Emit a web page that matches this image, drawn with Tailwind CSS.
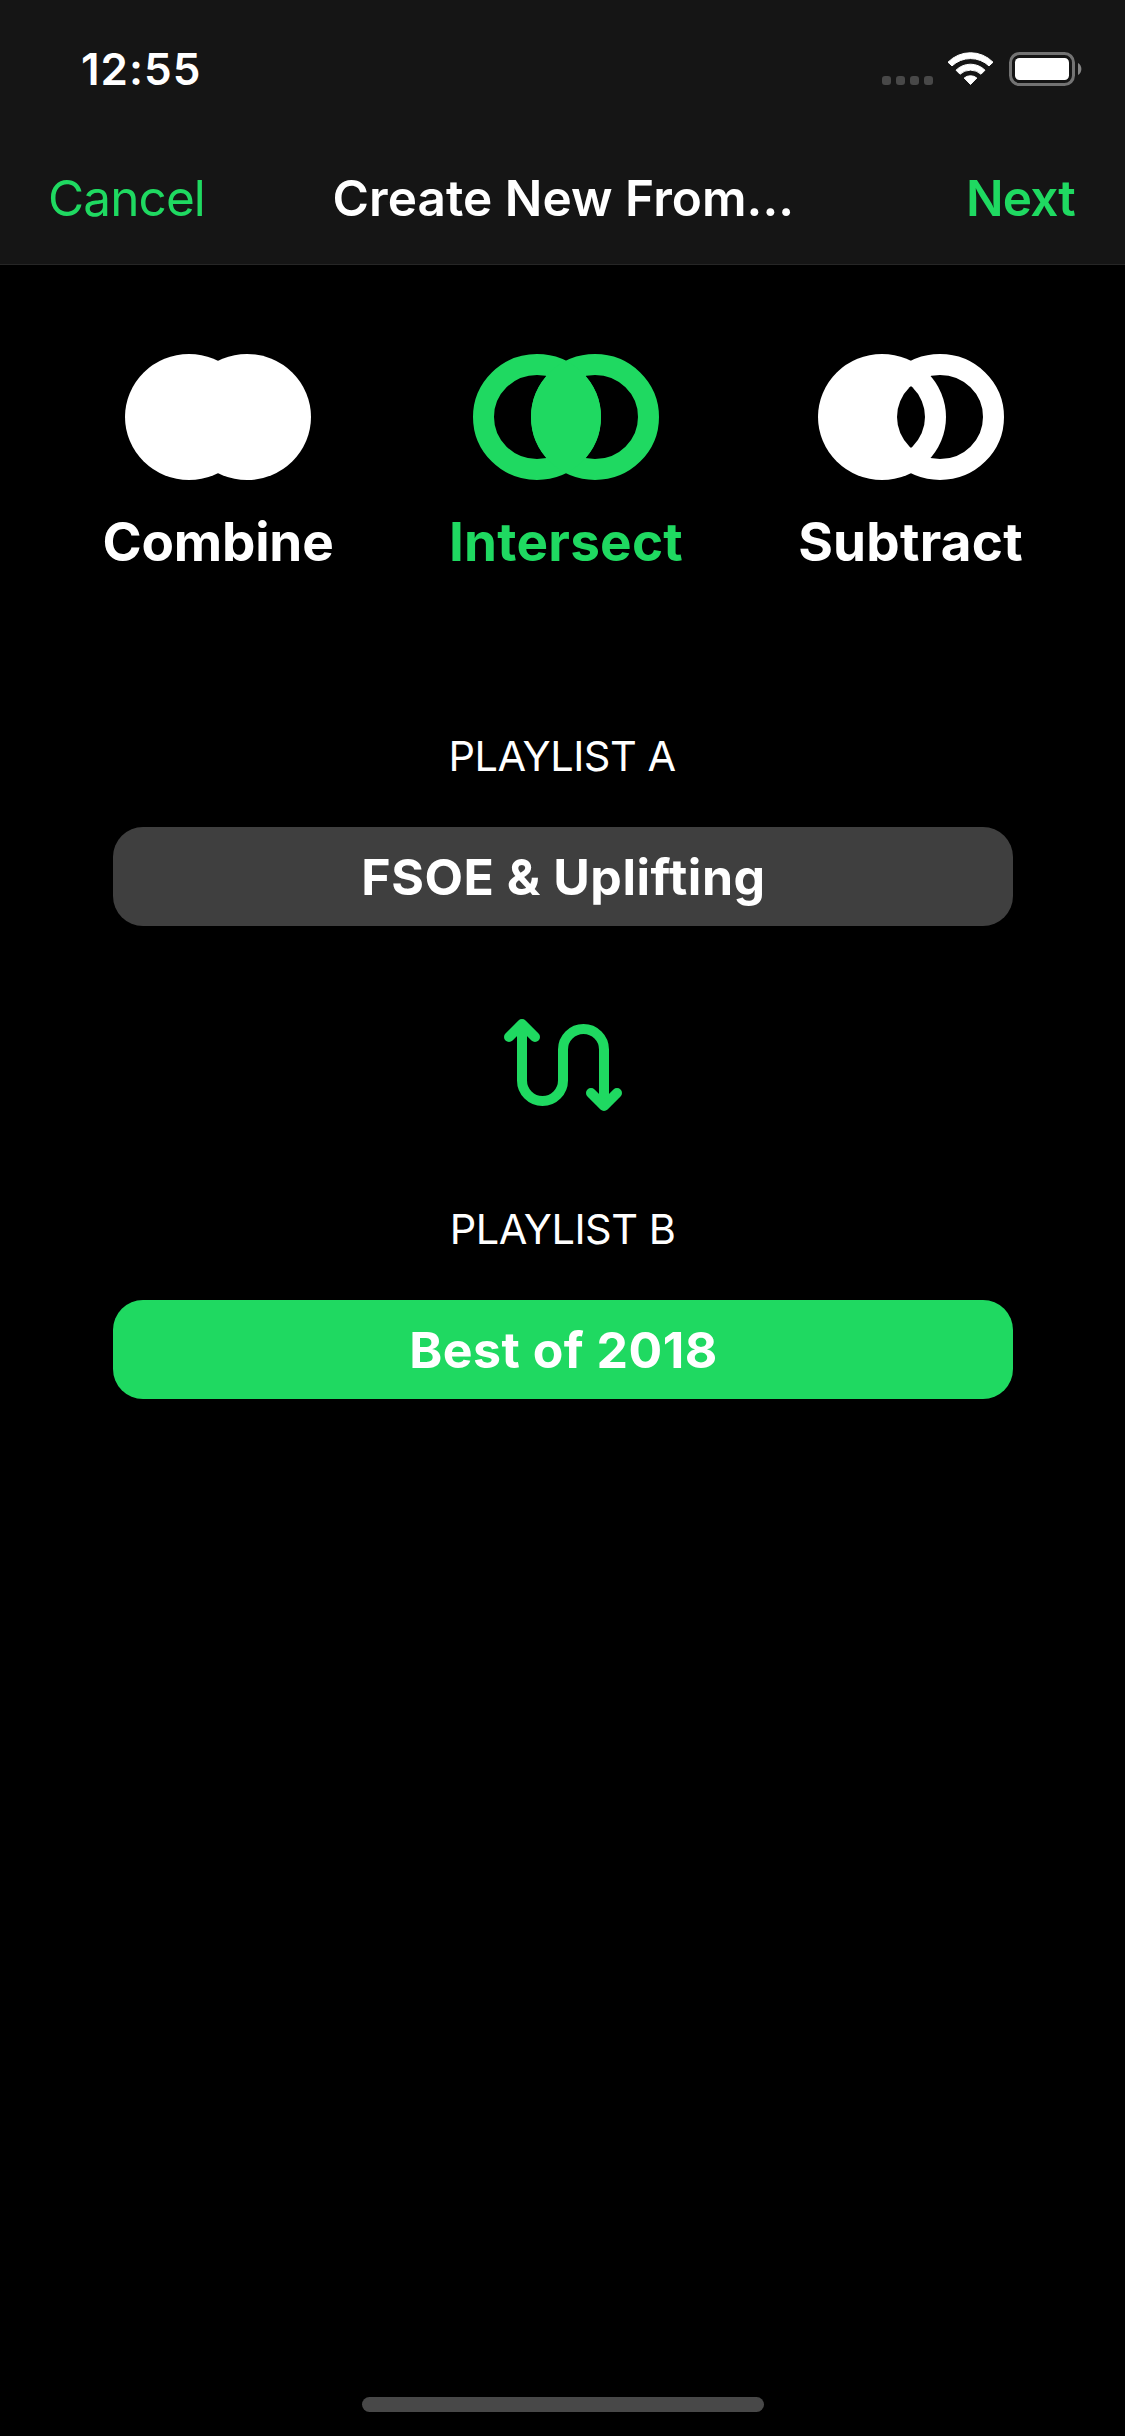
<!DOCTYPE html>
<html lang="en">
<head>
<meta charset="utf-8">
<title>Create New From...</title>
<script src="https://cdn.jsdelivr.net/npm/@tailwindcss/browser@4"></script>
</head>
<body class="bg-black">
<div class="relative flex h-[2436px] w-[1125px] flex-col overflow-hidden bg-black font-['Inter',sans-serif] text-white">
  <header class="h-[265px] border-b border-[#262626] bg-[#151515]">
    <!-- Status bar -->
    <div class="flex h-[138px] items-center justify-between pr-[43px] pl-[81px]">
      <span class="text-[44px] leading-none font-semibold tracking-[1px]">12:55</span>
      <div class="flex h-[34px] items-start">
        <div class="mt-6 flex gap-[5px]">
          <i class="size-[9px] rounded-[3px] bg-[#484848]"></i>
          <i class="size-[9px] rounded-[3px] bg-[#484848]"></i>
          <i class="size-[9px] rounded-[3px] bg-[#484848]"></i>
          <i class="size-[9px] rounded-[3px] bg-[#484848]"></i>
        </div>
        <svg class="ml-[14px] h-[34px] w-[48px]" viewBox="0 0 48 34" fill="#fff" stroke="#fff" stroke-width="1" stroke-linejoin="round">
          <path d="M1 10.2A31.5 31.5 0 0 1 46 10.2L42 13.9A27 27 0 0 0 5 13.9Z"/>
          <path d="M9 18.2A20.5 20.5 0 0 1 38 18.2L34 22.2A15.5 15.5 0 0 0 13 22.2Z"/>
          <path d="M17.2 26A10 10 0 0 1 29.8 26L23.5 32.5Z"/>
        </svg>
        <svg class="ml-[14px] h-[34px] w-[73px]" viewBox="0 0 73 34">
          <rect x="1.5" y="1.5" width="63" height="31" rx="9" fill="none" stroke="#737373" stroke-width="3"/>
          <rect x="6" y="6" width="54" height="22" rx="4.5" fill="#fff"/>
          <path d="M69 11A7 7 0 0 1 69 23Z" fill="#858585"/>
        </svg>
      </div>
    </div>
    <!-- Navigation bar -->
    <nav class="flex h-[122px] items-center text-[49.5px] leading-none">
      <span class="w-[284px] pl-[48px] tracking-[-0.9px] text-[#1fd961]">Cancel</span>
      <h1 class="w-[633.5px] pl-[48.5px] font-semibold tracking-[0.05px] whitespace-nowrap">Create New From...</h1>
      <span class="pl-[48.5px] font-semibold tracking-[-0.8px] text-[#1fd961]">Next</span>
    </nav>
  </header>

  <main>
    <section class="grid grid-cols-[348px_348px_341px] pt-[89px] pl-[44px] text-[53px] leading-[60px] font-bold">
      <div class="flex flex-col items-center gap-8">
        <svg class="h-[126px] w-[186px]" viewBox="0 0 186 126" fill="#fff">
          <ellipse cx="122" cy="63" rx="64" ry="63"/>
          <ellipse cx="64" cy="63" rx="64" ry="63"/>
        </svg>
        <span class="tracking-[-0.2px]">Combine</span>
      </div>
      <div class="flex flex-col items-center gap-8 text-[#1fd961]">
        <svg class="h-[126px] w-[186px]" viewBox="0 0 186 126" fill="currentColor">
          <defs>
            <clipPath id="left-disc"><ellipse cx="64" cy="63" rx="64" ry="63"/></clipPath>
          </defs>
          <ellipse cx="64" cy="63" rx="53.5" ry="52.5" fill="none" stroke="currentColor" stroke-width="21"/>
          <ellipse cx="122" cy="63" rx="53.5" ry="52.5" fill="none" stroke="currentColor" stroke-width="21"/>
          <ellipse cx="122" cy="63" rx="64" ry="63" clip-path="url(#left-disc)"/>
        </svg>
        <span class="tracking-[0.25px]">Intersect</span>
      </div>
      <div class="flex flex-col items-center gap-8">
        <svg class="h-[126px] w-[186px]" viewBox="0 0 186 126" fill="#fff">
          <defs>
            <clipPath id="left-hole"><ellipse cx="64" cy="63" rx="43" ry="42"/></clipPath>
          </defs>
          <ellipse cx="64" cy="63" rx="64" ry="63"/>
          <ellipse cx="122" cy="63" rx="53.5" ry="52.5" fill="none" stroke="#fff" stroke-width="21"/>
          <ellipse cx="122" cy="63" rx="43" ry="42" fill="#000" clip-path="url(#left-hole)"/>
        </svg>
        <span class="tracking-[0.25px]">Subtract</span>
      </div>
    </section>

    <section class="mt-40 flex flex-col items-center">
      <h2 class="pr-px text-[41.5px] leading-[48px] tracking-[-0.5px]">PLAYLIST A</h2>
      <button class="mt-[47px] h-[99px] w-[900px] rounded-[30px] bg-[#3f3f3f] pl-[2px] text-[50px] leading-none font-bold tracking-[0.52px]">FSOE &amp; Uplifting</button>
      <svg class="mt-[93px] h-[92px] w-[118px]" viewBox="0 0 118 92" fill="none" stroke="#1fd961" stroke-width="10" stroke-linecap="round" stroke-linejoin="round">
        <path d="M18 6V61.5A20.5 20.5 0 0 0 59 61.5V30.5A20.5 20.5 0 0 1 100 30.5V86"/>
        <path d="M5 18L18 5L31 18M87 74L100 87L113 74"/>
      </svg>
      <h2 class="mt-[94px] text-[41.5px] leading-[48px] tracking-[-0.5px]">PLAYLIST B</h2>
      <button class="mt-[47px] h-[99px] w-[900px] rounded-[30px] bg-[#1fd961] pl-[2px] text-[50px] leading-none font-bold tracking-[0.5px]">Best of 2018</button>
    </section>
  </main>

  <!-- Home indicator -->
  <div class="mt-auto mb-6 ml-[362px] h-[15px] w-[402px] rounded-full bg-[#484848]"></div>
</div>
</body>
</html>
